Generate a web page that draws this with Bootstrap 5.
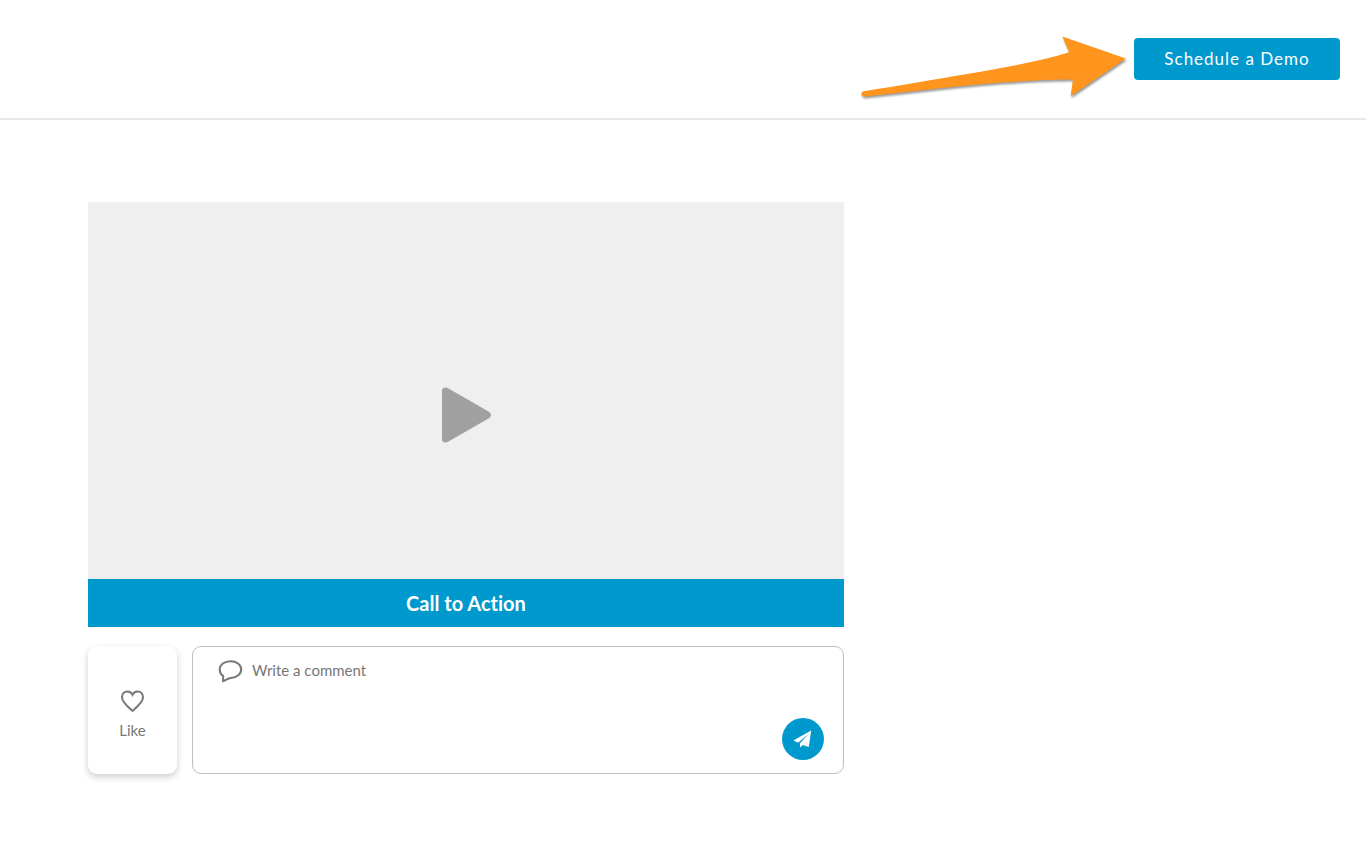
<!DOCTYPE html>
<html lang="en">
<head>
<meta charset="utf-8">
<meta name="viewport" content="width=device-width, initial-scale=1">
<title>Video page</title>
<link href="https://cdn.jsdelivr.net/npm/bootstrap@5.3.0/dist/css/bootstrap.min.css" rel="stylesheet">
<style>
  :root { --brand: #0099cd; --muted: #777; }
  body { font-family: Lato, "Open Sans", sans-serif; background: #fff; }
  .site-header { min-height: 120px; padding-right: 26px; border-bottom: 2px solid #e8e8e8; }
  .pointer-arrow { filter: drop-shadow(1px 2px 1px rgba(0, 0, 0, .4)); }
  .btn-demo {
    --bs-btn-color: #fff; --bs-btn-bg: var(--brand);
    --bs-btn-hover-color: #fff; --bs-btn-hover-bg: #0088b8;
    --bs-btn-border-width: 0; --bs-btn-border-radius: 4px;
    --bs-btn-padding-x: 28px; --bs-btn-padding-y: 9px;
    min-width: 206px; font-size: 17px; line-height: 24px; letter-spacing: 1px;
  }
  .page-main { padding: 82px 88px; }
  .video-column { max-width: 756px; }
  .video-screen { min-height: 377px; padding-top: 54px; background: #efefef; border-radius: 0; }
  .cta-bar {
    --bs-btn-color: #fff; --bs-btn-bg: var(--brand);
    --bs-btn-hover-color: #fff; --bs-btn-hover-bg: #0088b8;
    --bs-btn-border-width: 0; --bs-btn-border-radius: 0; --bs-btn-padding-y: 12px;
    font-size: 20px; line-height: 24px; font-weight: 700; font-variant-ligatures: none;
  }
  .feedback { margin-top: 19px; gap: 15px; min-height: 128px; }
  .like-card {
    width: 89px; padding-top: 11px; border-radius: 9px; background: #fff; color: var(--muted);
    font-size: 15px; line-height: 20px; box-shadow: 0 3px 7px rgba(0, 0, 0, .2);
  }
  .comment-box { border: 1px solid #bfc1c1; border-radius: 9px; padding: 12px 19px 13px 25px; }
  .comment-input {
    color: var(--muted); font-size: 15px; line-height: 20px; resize: none; padding: 1px 0 0;
    background: transparent; box-shadow: none !important;
  }
  .comment-input::placeholder { color: var(--muted); opacity: 1; }
  .send-btn { width: 42px; height: 42px; background: var(--brand); }
</style>
</head>
<body>
<header class="site-header d-flex align-items-center justify-content-end">
  <svg class="pointer-arrow" width="274" height="86" viewBox="860 16 274 86" aria-hidden="true">
    <path fill="#ff951c" d="M863.500 91.300C900 85.500 935 79.500 967 74C1003 68 1039 61.500 1069.200 52.300L1062.300 36.600L1125.800 58.500L1070.600 96.200L1073 79.600C1043 79.300 1010 82 983 84C944 87.500 905 92 864.500 96.500Q861.500 96.500 861.300 93.800Q861.300 91.800 863.500 91.300Z"/>
  </svg>
  <button type="button" class="btn btn-demo">Schedule a Demo</button>
</header>
<main class="page-main">
  <div class="video-column">
    <button type="button" class="video-screen btn w-100 d-flex align-items-center justify-content-center border-0" aria-label="Play video">
      <svg width="50" height="56" viewBox="0 0 50 56" aria-hidden="true">
        <path fill="#a0a0a0" d="M1 4Q1 .5 4.500 .5Q6 .5 7.500 1.500L47.500 24.500Q50 26 50 28Q50 30 47.500 31.500L7.500 54.500Q6 55.500 4.500 55.500Q1 55.500 1 52Z"/>
      </svg>
    </button>
    <button type="button" class="btn cta-bar w-100 d-block">Call to Action</button>
    <div class="feedback d-flex">
      <button type="button" class="like-card border-0 flex-shrink-0 d-flex flex-column align-items-center justify-content-center gap-2">
        <svg width="24" height="22" viewBox="0 0 24 22" fill="none" stroke="#777" stroke-width="2" aria-hidden="true">
          <path d="M11.500 20.800C7.500 17.300 1 12.300 1 7.200C1 3.800 3.400 1.500 6.500 1.500C8.800 1.500 10.600 2.700 11.500 4.700C12.400 2.700 14.200 1.500 16.500 1.500C19.600 1.500 22 3.800 22 7.200C22 12.300 15.500 17.300 11.500 20.800Z"/>
        </svg>
        <span>Like</span>
      </button>
      <form class="comment-box flex-grow-1 d-flex">
        <svg class="flex-shrink-0 me-2" width="26" height="24" viewBox="0 0 26 24" fill="none" stroke="#777" stroke-width="2" stroke-linejoin="round" aria-hidden="true">
          <path d="M5 22.300L5.200 17.100C3 15.500 1.700 13.200 1.700 10.700C1.700 5.700 6.500 2.200 12.500 2.200C18.500 2.200 23.200 5.500 23.200 10.200C23.200 15 18.800 18.800 13 19C9.800 19.200 7.500 21.500 5 22.300Z"/>
        </svg>
        <textarea class="comment-input form-control border-0" placeholder="Write a comment" aria-label="Write a comment"></textarea>
        <button type="submit" class="send-btn btn border-0 rounded-circle p-0 flex-shrink-0 align-self-end d-flex align-items-center justify-content-center" aria-label="Send comment">
          <svg width="20" height="20" viewBox="0 0 20 20" fill="#fff" aria-hidden="true">
            <path d="M18.200 1.400L.4 11.600L5 13.800L15.500 5L6.800 14.600L7.200 18.600L9.800 16L15.800 17.900Z"/>
          </svg>
        </button>
      </form>
    </div>
  </div>
</main>
<script src="https://cdn.jsdelivr.net/npm/bootstrap@5.3.0/dist/js/bootstrap.bundle.min.js"></script>
</body>
</html>
